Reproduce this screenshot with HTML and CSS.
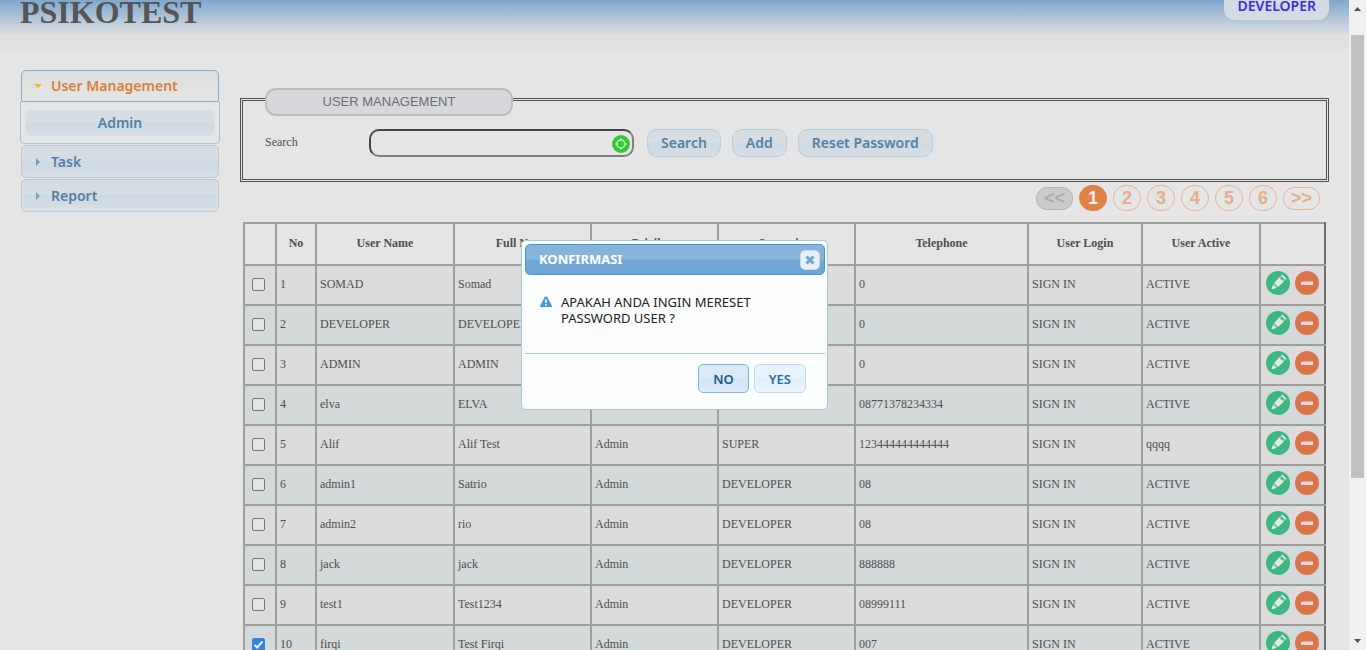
FILE: index.html
```html
<!DOCTYPE html>
<html lang="id">
<head>
<meta charset="utf-8">
<title>Psikotest - User Management</title>
<link rel="stylesheet" href="styles.css">
</head>
<body>
<svg class="defs" aria-hidden="true">
  <symbol id="edit" viewBox="0 0 24 24">
    <circle cx="12" cy="12" r="12" fill="#3bb981"/>
    <g fill="#e3e7e3" transform="translate(12 12) rotate(45)">
      <rect x="-3" y="-9" width="6" height="1.800"/>
      <path d="M-3-6.200H-2V-4.800H2V-6.200H3V1.800L2 3H-2L-3 1.800Z"/>
      <path d="M-2.500 4.200H2.500L1 7.600 0 9-1 7.600Z"/>
    </g>
  </symbol>
  <symbol id="remove" viewBox="0 0 24 24">
    <circle cx="12" cy="12" r="12" fill="#dc7449"/>
    <rect x="6" y="10.5" width="12" height="3.5" fill="#e4dcdc"/>
  </symbol>
</svg>
<div class="page">
  <header class="banner">
    <h1 class="brand">PSIKOTEST</h1>
    <a class="account" href="#">DEVELOPER</a>
  </header>
  <div class="layout">
    <nav class="menu">
      <button class="menu-head open" type="button"><svg class="caret" viewBox="0 0 8 8"><path d="M0 2H8L4 6Z" fill="#edb62e"/></svg>User Management</button>
      <div class="menu-panel"><a class="menu-link" href="#">Admin</a></div>
      <button class="menu-head" type="button"><svg class="caret" viewBox="0 0 8 8"><path d="M2 0V8L6 4Z" fill="#6fa3cc"/></svg>Task</button>
      <button class="menu-head" type="button"><svg class="caret" viewBox="0 0 8 8"><path d="M2 0V8L6 4Z" fill="#6fa3cc"/></svg>Report</button>
    </nav>
    <main class="content">
      <fieldset class="filter">
        <legend class="legend"><span class="legend-pill">USER MANAGEMENT</span></legend>
        <form class="filter-row">
          <label class="filter-label" for="q">Search</label>
          <div class="search">
            <input class="search-input" id="q" type="text">
            <svg class="search-icon" viewBox="0 0 18 18" aria-hidden="true"><circle cx="9" cy="9" r="9" fill="#32cb35"/><circle cx="9" cy="9" r="4" fill="none" stroke="#c8f0c8" stroke-width="1.5"/><path d="M9 3.5V5M9 13V14.5M3.5 9H5M13 9H14.5" stroke="#c8f0c8" stroke-width="2"/></svg>
          </div>
          <button class="btn" type="button">Search</button>
          <button class="btn" type="button">Add</button>
          <button class="btn" type="button">Reset Password</button>
        </form>
      </fieldset>
      <nav class="pager" aria-label="Pages">
        <button class="page-step" type="button" disabled>&lt;&lt;</button>
        <button class="page-num current" type="button">1</button>
        <button class="page-num" type="button">2</button>
        <button class="page-num" type="button">3</button>
        <button class="page-num" type="button">4</button>
        <button class="page-num" type="button">5</button>
        <button class="page-num" type="button">6</button>
        <button class="page-step" type="button">&gt;&gt;</button>
      </nav>
      <table class="users">
        <colgroup><col class="c-check"><col class="c-no"><col class="c-user"><col class="c-full"><col class="c-priv"><col class="c-super"><col class="c-tel"><col class="c-login"><col class="c-active"><col class="c-tools"></colgroup>
        <thead><tr><th></th><th>No</th><th>User Name</th><th>Full Name</th><th>Privilege</th><th>Supervisor</th><th>Telephone</th><th>User Login</th><th>User Active</th><th></th></tr></thead>
        <tbody id="rows"></tbody>
      </table>
    </main>
  </div>
  <dialog class="dialog" open aria-labelledby="dlg-title">
    <div class="dialog-title"><span class="dialog-name" id="dlg-title">KONFIRMASI</span>
      <button class="dialog-close" type="button" aria-label="Close"><svg viewBox="0 0 10 10"><path d="M1.5 1.5L8.5 8.5M8.5 1.5L1.5 8.5" stroke="#6fa6d2" stroke-width="3"/></svg></button>
    </div>
    <div class="dialog-body">
      <svg class="warn" viewBox="0 0 12 12" aria-hidden="true"><path d="M5 .5H7L12 10V11H0V10Z" fill="#469bdd"/><path d="M5.2 3.5H6.8V7H5.2ZM5.2 8H6.8V9.6H5.2Z" fill="#fff"/></svg>
      <p class="dialog-text">APAKAH ANDA INGIN MERESET PASSWORD USER ?</p>
    </div>
    <div class="dialog-actions">
      <button class="dialog-btn focused" type="button">NO</button>
      <button class="dialog-btn" type="button">YES</button>
    </div>
  </dialog>
</div>
<div class="scrollbar" aria-hidden="true">
  <svg class="arrow" viewBox="0 0 17 17"><path d="M5 11H12L8.500 7Z" fill="#505050"/></svg>
  <div class="track"><div class="thumb"></div></div>
  <svg class="arrow" viewBox="0 0 17 17"><path d="M5 6H12L8.500 10Z" fill="#505050"/></svg>
</div>
<script src="rows.js"></script>
</body>
</html>
```
FILE: styles.css
```css
* { box-sizing: border-box; }
body {
  margin: 0;
  display: flex;
  height: 100vh;
  overflow: hidden;
  background: #e5e5e5;
  color: #4f4f4f;
  font: 12px/16px "Liberation Serif", serif;
}
.defs { position: absolute; width: 0; height: 0; }
button { font: inherit; cursor: pointer; }
.page { position: relative; flex: 1; min-width: 0; overflow: hidden; }

.banner {
  display: flex;
  justify-content: space-between;
  align-items: flex-start;
  height: 50px;
  padding: 0 20px;
  background: linear-gradient(#7ea8d0 0, #e1e1e1 36px);
}
.brand { margin: 0; font-size: 32px; line-height: 24px; color: #555; }
.account {
  height: 20px;
  padding: 0 13px;
  border-radius: 0 0 11px 11px;
  background: #d4dce3;
  color: #3f2be0;
  font: 600 14px/11px "Noto Sans", sans-serif;
  text-decoration: none;
}

.layout { display: flex; gap: 20px; padding: 20px 20px 0; }
.menu { width: 200px; flex: none; display: flex; flex-direction: column; }
.menu-head {
  display: flex;
  align-items: center;
  gap: 9px;
  height: 33px;
  margin: 0 1px 1px;
  padding: 0 12px;
  border: 1px solid #b9cbd9;
  border-radius: 5px;
  background: linear-gradient(#d6dde3 50%, #cddae4 50%, #d8dee5);
  color: #5480a5;
  font: 600 14px/20px "Noto Sans", sans-serif;
}
.menu-head.open {
  height: 32px;
  margin-bottom: 0;
  border-color: #82afd6;
  border-radius: 5px 5px 0 0;
  background: linear-gradient(#dededd, #e5e6e4);
  color: #d77f3c;
}
.caret { width: 8px; height: 8px; }
.menu-panel {
  margin-bottom: 1px;
  padding: 8px 5px 7px;
  border: 1px solid #a2c0d8;
  border-top: 0;
  border-radius: 0 0 5px 5px;
}
.menu-link {
  display: block;
  border-radius: 5px;
  background: linear-gradient(#d6dde3 50%, #cddae4 50%, #d8dee5);
  color: #5480a5;
  font: 600 14px/26px "Noto Sans", sans-serif;
  text-align: center;
  text-decoration: none;
}

.content { flex: 1; min-width: 0; }
.filter {
  margin: 13px 0 0;
  padding: 13px 22px 22px;
  border: 3px double #4f4f4f;
}
.legend { width: 248px; padding: 5px 0 0; }
.legend-pill {
  display: block;
  border: 2px solid #bdbdbf;
  border-radius: 11px;
  background: #d6d8dc;
  color: #6e6e6e;
  font: 13px/24px "Liberation Sans", sans-serif;
  text-align: center;
}
.filter-row { display: flex; align-items: center; }
.filter-label { width: 104px; padding-bottom: 2px; }
.search { position: relative; width: 265px; margin-right: 13px; }
.search-input {
  display: block;
  width: 100%;
  height: 28px;
  padding: 0 24px 0 8px;
  border: 2px solid;
  border-color: #454545 #808080 #808080 #454545;
  border-radius: 10px;
  background: #e5e5e5;
}
.search-icon { position: absolute; right: 4px; top: 6px; width: 18px; height: 18px; }
.btn {
  height: 28px;
  margin-right: 11px;
  padding: 0 13px;
  border: 1px solid #bbccda;
  border-radius: 10px;
  background: linear-gradient(#d6dde3 50%, #cddae4 50%, #d8dee5);
  color: #5480a5;
  font: 600 14px/20px "Noto Sans", sans-serif;
}

.pager {
  display: flex;
  justify-content: flex-end;
  align-items: center;
  gap: 6px;
  padding: 3px 9px 0 0;
}
.page-num, .page-step {
  padding: 0;
  border: 1px solid #e9b193;
  background: none;
  color: #e8ad8d;
  font: bold 18px/24px "Liberation Sans", sans-serif;
}
.page-num { width: 28px; height: 26px; border-radius: 13px; }
.page-step { width: 37px; height: 23px; border-radius: 11px; line-height: 21px; }
.page-step:disabled { border-color: #b5b5b5; background: #cbcbcb; color: #adadad; }
.page-num.current { border-color: #df8148; background: #df8148; color: #eee; }

.users {
  width: calc(100% - 6px);
  margin: 11px 3px 0;
  border-collapse: collapse;
  table-layout: fixed;
}
.users th, .users td { height: 40px; padding: 0 3px 2px; border: 2px solid #9e9e9e; text-align: left; white-space: nowrap; }
.users th { height: 42px; text-align: center; }
.users tr > :last-child { border-right-color: #6e6e6e; }
.users tbody tr:nth-child(odd) { background: #dcdcdc; }
.users tbody tr:nth-child(even) { background: #d4d9da; }
.c-check { width: 32px; }
.c-no { width: 40px; }
.c-user { width: 138px; }
.c-full { width: 137px; }
.c-priv { width: 127px; }
.c-super { width: 137px; }
.c-tel { width: 173px; }
.c-login { width: 114px; }
.c-active { width: 118px; }
.c-tools { width: 65px; }
.users .cell-check { padding: 0 0 2px; }
.check {
  appearance: none;
  display: block;
  width: 13px;
  height: 13px;
  margin: 0 auto 0 7px;
  border: 1px solid #757575;
  border-radius: 2px;
  background: #e5e5e5;
}
.check:checked {
  border-color: #3682e0;
  background: #3682e0 url("data:image/svg+xml,%3Csvg xmlns='http://www.w3.org/2000/svg' viewBox='0 0 11 11'%3E%3Cpath d='M1.500 6L4.200 8.500L9.500 2.500' fill='none' stroke='%23eee' stroke-width='2'/%3E%3C/svg%3E");
}
.tools { display: flex; gap: 5px; padding: 0 2px 3px; }
.tool { display: block; width: 24px; height: 24px; padding: 0; border: 0; background: none; }
.tool svg { display: block; width: 24px; height: 24px; }

.dialog {
  position: absolute;
  inset: 0;
  width: 307px;
  height: fit-content;
  margin: auto;
  padding: 3px 2px 3px 3px;
  border: 1px solid #a6c9e2;
  border-radius: 5px;
  background: #fcfdfd;
  color: #222;
  font: 13px/16px "Noto Sans", sans-serif;
}
.dialog-title {
  display: flex;
  justify-content: space-between;
  align-items: center;
  height: 31px;
  padding: 0 4px 0 13px;
  border: 1px solid #4297d7;
  border-radius: 5px;
  background: linear-gradient(#88b4da 48%, #72a8d4 52%, #6ea5d2);
  color: #fff;
  font-weight: bold;
}
.dialog-name { padding-bottom: 2px; }
.dialog-close {
  display: grid;
  place-items: center;
  width: 20px;
  height: 20px;
  padding: 0;
  border: 1px solid #c5dbec;
  border-radius: 5px;
  background: #e6f1fb;
}
.dialog-close svg { width: 10px; height: 10px; }
.dialog-body { display: flex; gap: 9px; height: 78px; padding: 19px 15px 0; }
.warn { flex: none; width: 12px; height: 12px; margin-top: 2px; }
.dialog-text { margin: 0; }
.dialog-actions {
  display: flex;
  justify-content: flex-end;
  gap: 5px;
  padding: 10px 19px 13px;
  border-top: 1px solid #a6c9e2;
}
.dialog-btn {
  height: 29px;
  padding: 0 14px;
  border: 1px solid #c5dbec;
  border-radius: 5px;
  background: linear-gradient(#e8f2fc 50%, #dfeffc 50%, #edf5fd);
  color: #2e6e9e;
  font-weight: 600;
}
.dialog-btn.focused {
  border-color: #79b7e7;
  background: linear-gradient(#dbeaf8 50%, #cfe4f6 50%, #dcecf9);
  color: #1d5987;
}

.scrollbar { width: 17px; flex: none; display: flex; flex-direction: column; background: #f0f0f0; }
.arrow { width: 17px; height: 17px; flex: none; }
.track { flex: 1; padding: 18px 2px 0; }
.thumb { height: 74%; background: #c1c1c1; }
```
FILE: rows.js
```js
const users = [
  ["SOMAD", "Somad", "Admin", "DEVELOPER", "0", "ACTIVE"],
  ["DEVELOPER", "DEVELOPER", "Admin", "DEVELOPER", "0", "ACTIVE"],
  ["ADMIN", "ADMIN", "Admin", "DEVELOPER", "0", "ACTIVE"],
  ["elva", "ELVA", "Admin", "DEVELOPER", "08771378234334", "ACTIVE"],
  ["Alif", "Alif Test", "Admin", "SUPER", "123444444444444", "qqqq"],
  ["admin1", "Satrio", "Admin", "DEVELOPER", "08", "ACTIVE"],
  ["admin2", "rio", "Admin", "DEVELOPER", "08", "ACTIVE"],
  ["jack", "jack", "Admin", "DEVELOPER", "888888", "ACTIVE"],
  ["test1", "Test1234", "Admin", "DEVELOPER", "08999111", "ACTIVE"],
  ["firqi", "Test Firqi", "Admin", "DEVELOPER", "007", "ACTIVE"]
];
const selected = 9;

document.getElementById("rows").innerHTML = users.map((u, i) => `
  <tr>
    <td class="cell-check"><input class="check" type="checkbox" aria-label="Select ${u[0]}"${i === selected ? " checked" : ""}></td>
    <td>${i + 1}</td><td>${u[0]}</td><td>${u[1]}</td><td>${u[2]}</td><td>${u[3]}</td><td>${u[4]}</td><td>SIGN IN</td><td>${u[5]}</td>
    <td><div class="tools">
      <button class="tool" type="button" aria-label="Edit"><svg><use href="#edit"/></svg></button>
      <button class="tool" type="button" aria-label="Delete"><svg><use href="#remove"/></svg></button>
    </div></td>
  </tr>`).join("");
```
